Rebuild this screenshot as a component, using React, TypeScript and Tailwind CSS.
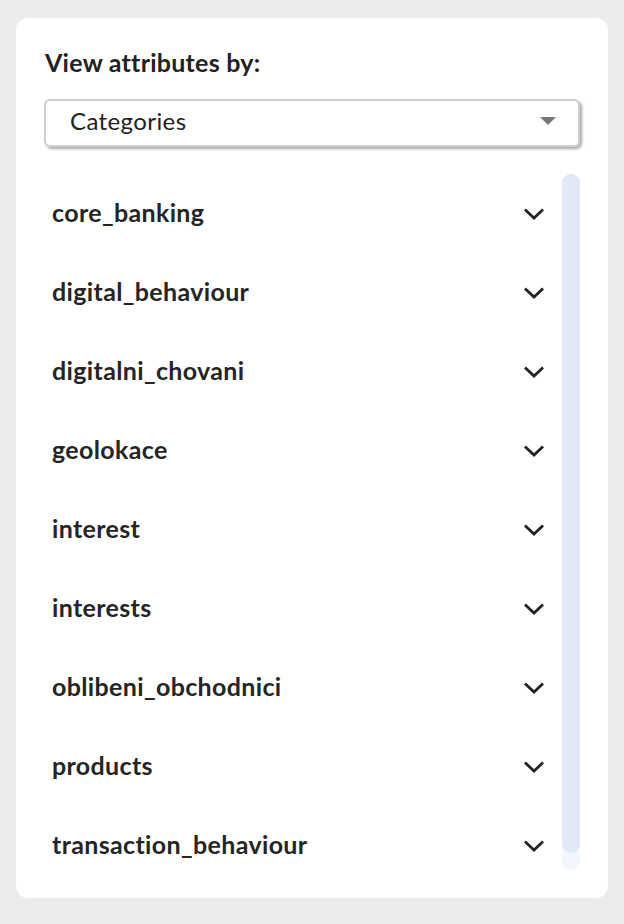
import React from "react";

const items = [
  "core_banking",
  "digital_behaviour",
  "digitalni_chovani",
  "geolokace",
  "interest",
  "interests",
  "oblibeni_obchodnici",
  "products",
  "transaction_behaviour",
];

function Chevron() {
  return (
    <svg width="22" height="14" viewBox="0 0 22 14" fill="none">
      <path d="M3 3.5 L11 11 L19 3.5" stroke="#222222" strokeWidth="2.8" strokeLinecap="square" strokeLinejoin="miter" />
    </svg>
  );
}

export default function App() {
  return (
    <div className="min-h-[924px] w-[624px] bg-[#ececec] pt-[18px] pl-[16px]" style={{ fontFamily: "Lato, 'Noto Sans', sans-serif" }}>
      <div className="w-[592px] h-[880px] bg-white rounded-[12px] px-[28px] pt-[26px]">
        <div className="h-[36px] leading-[36px] text-[25px] font-bold tracking-[0.25px] text-[#222] mb-[19px] pl-[1px]">View attributes by:</div>
        <div className="h-[48px] border-2 border-[#cfcfcf] rounded-[6px] shadow-[2px_2px_3px_rgba(0,0,0,0.35)] flex items-center justify-between pl-[24px] pr-[22px]">
          <span className="text-[24px] leading-[30px] tracking-[0.4px] text-[#222] -mt-[4px]">Categories</span>
          <svg width="16" height="9" viewBox="0 0 16 9" className="-mt-[4px]">
            <path d="M0 0 L16 0 L8 8 Z" fill="#777777" />
          </svg>
        </div>
        <div className="mt-[27px] h-[696px] flex">
          <div className="flex-1 overflow-hidden">
            {items.map((it) => (
              <div key={it} className="h-[79px] flex items-center justify-between pl-[8px] pr-[17px]">
                <span className="text-[25px] leading-[30px] font-bold tracking-[0.35px] text-[#252525] -mt-[3px]">{it}</span>
                <Chevron />
              </div>
            ))}
          </div>
          <div className="w-[18px] h-[696px] bg-[#f4f6fd] rounded-full">
            <div className="w-[18px] h-[679px] bg-[#e1e8f8] rounded-full" />
          </div>
        </div>
      </div>
    </div>
  );
}
